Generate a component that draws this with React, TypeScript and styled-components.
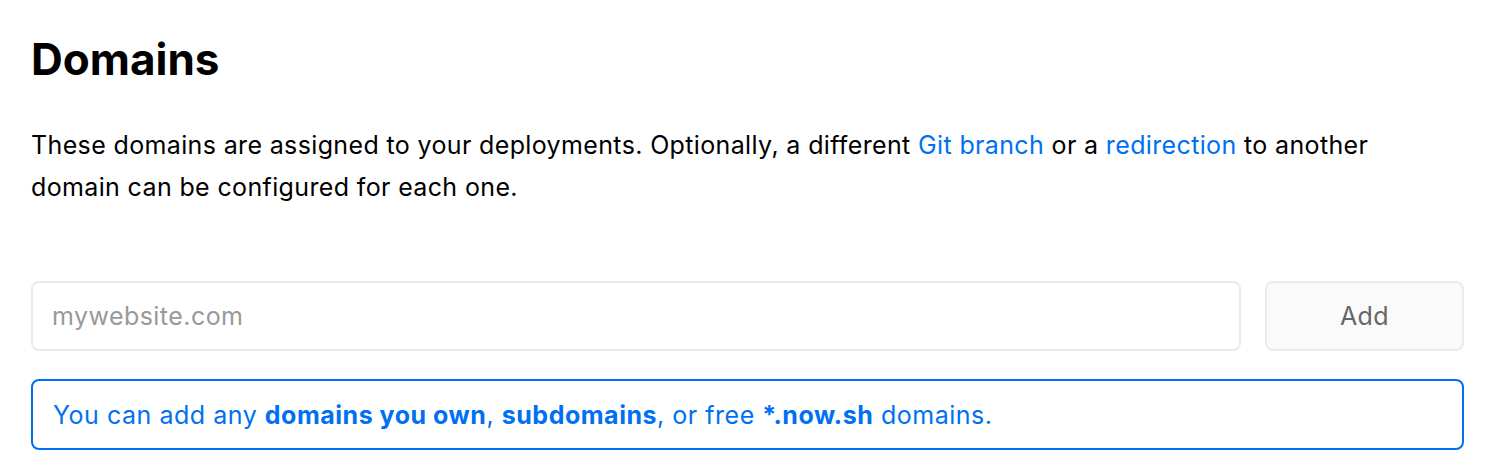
import React from "react";
import styled, { createGlobalStyle } from "styled-components";

const Global = createGlobalStyle`
  html, body { margin: 0; padding: 0; background: #fff; }
  body { font-family: Inter, "Noto Sans", sans-serif; color: #000; -webkit-font-smoothing: antialiased; }
  * { box-sizing: border-box; }
`;

const Page = styled.main`
  padding: 27px 28px 0 31px;
  display: flex;
  flex-direction: column;
`;

const Title = styled.h1`
  margin: 0;
  font-size: 44px;
  font-weight: 700;
  line-height: 64px;
  letter-spacing: 0;
`;

const Description = styled.p`
  margin: 33px 0 0;
  font-size: 25px;
  line-height: 42px;
  letter-spacing: 0.36px;
`;

const Link = styled.a`
  color: #0070f3;
  text-decoration: none;
`;

const Row = styled.div`
  display: flex;
  gap: 24px;
  margin-top: 73px;
`;

const Input = styled.input`
  flex: 1;
  height: 70px;
  border: 2px solid #eaeaea;
  border-radius: 8px;
  padding: 0 19px;
  font-family: inherit;
  font-size: 25px;
  letter-spacing: 0.45px;
  color: #000;
  outline: none;
  &::placeholder { color: #999; }
`;

const Button = styled.button`
  width: 199px;
  height: 70px;
  border: 2px solid #eaeaea;
  border-radius: 8px;
  background: #fafafa;
  color: #666;
  font-family: inherit;
  font-size: 25px;
  font-weight: 400;
  letter-spacing: 0.45px;
`;

const Notice = styled.div`
  margin-top: 28px;
  height: 71px;
  border: 2px solid #0070f3;
  border-radius: 8px;
  padding: 0 20px;
  display: flex;
  align-items: center;
  color: #0070f3;
  font-size: 25px;
  letter-spacing: 0.52px;
  b { font-weight: 700; }
`;

export default function App() {
  return (
    <>
      <Global />
      <Page>
        <Title>Domains</Title>
        <Description>
          These domains are assigned to your deployments. Optionally, a different{" "}
          <Link href="#">Git branch</Link> or a <Link href="#">redirection</Link> to another
          <br />
          domain can be configured for each one.
        </Description>
        <Row>
          <Input placeholder="mywebsite.com" />
          <Button>Add</Button>
        </Row>
        <Notice>
          <span>
            You can add any <b>domains you own</b>, <b>subdomains</b>, or free <b>*.now.sh</b> domains.
          </span>
        </Notice>
      </Page>
    </>
  );
}
